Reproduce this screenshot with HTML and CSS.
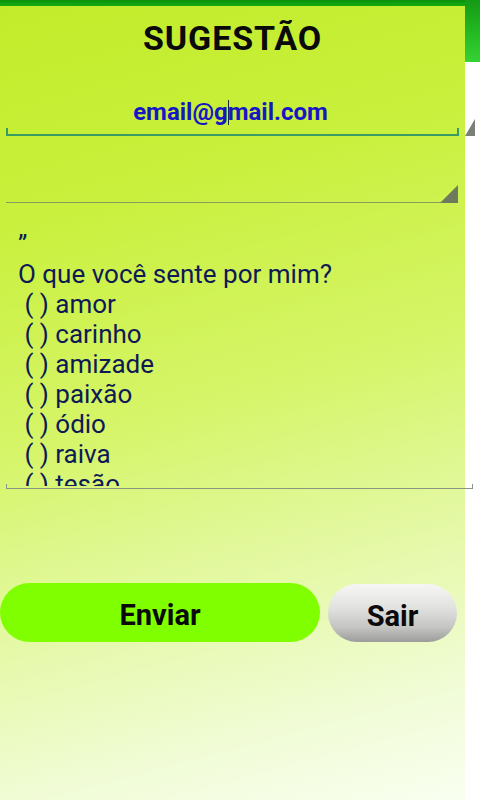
FILE: index.html
```html
<!DOCTYPE html>
<html lang="pt">
<head>
<meta charset="utf-8">
<title>Sugestão</title>
<link rel="stylesheet" href="styles.css">
</head>
<body>
<div class="screen">
  <main class="panel">
    <div class="topbar"></div>
    <h1 class="title">SUGESTÃO</h1>
    <div class="field email-field">
      <span class="email">email@g<span class="caret"></span>mail.com</span>
      <span class="spin spin-email"></span>
    </div>
    <div class="field blank-field">
      <span class="spin spin-blank"></span>
    </div>
    <div class="textarea">
      <div class="text">”
O que você sente por mim?
 ( ) amor
 ( ) carinho
 ( ) amizade
 ( ) paixão
 ( ) ódio
 ( ) raiva
 ( ) tesão</div>
    </div>
    <div class="buttons">
      <button class="btn btn-send">Enviar</button>
      <button class="btn btn-exit">Sair</button>
    </div>
  </main>
  <aside class="side"><div class="side-top"></div></aside>
</div>
</body>
</html>
```

FILE: styles.css
```css
html, body {
  margin: 0;
  padding: 0;
  background: #ffffff;
}
body {
  width: 480px;
  height: 800px;
  overflow: hidden;
  font-family: Roboto, "Noto Sans", "Liberation Sans", sans-serif;
}
.screen {
  display: flex;
  width: 480px;
  height: 800px;
}
.panel {
  position: relative;
  width: 465px;
  height: 800px;
  display: flex;
  flex-direction: column;
  background: linear-gradient(165deg, #c2ec2a 0%, #c9f03c 24%, #d6f56a 50%, #e6f9ac 72%, #f1fcd8 88%, #f9fff0 100%);
}
.topbar {
  height: 6px;
  background: linear-gradient(180deg, #0a920a, #16aa12);
}
.side {
  width: 15px;
  background: #ffffff;
}
.side-top {
  height: 62px;
  background: linear-gradient(180deg, #149a14 0%, #22b822 50%, #36d234 100%);
}
.title {
  margin: 13px 0 0;
  height: 38px;
  line-height: 38px;
  font-size: 34px;
  letter-spacing: 0.9px;
  font-weight: 700;
  text-align: center;
  color: #0a0a0a;
}
.field {
  position: relative;
  margin-left: 6px;
}
.email-field {
  margin-top: 41px;
  width: 453px;
  height: 36px;
  border-bottom: 2px solid #3a9c62;
  text-align: center;
}
.email-field::before,
.email-field::after {
  content: "";
  position: absolute;
  bottom: 0;
  width: 2px;
  height: 6px;
  background: #3a9c62;
}
.email-field::before { left: 0; }
.email-field::after { right: 0; }
.email {
  display: inline-block;
  margin-left: -4px;
  line-height: 28px;
  font-size: 24px;
  font-weight: 700;
  color: #1616c4;
}
.caret {
  display: inline-block;
  width: 1px;
  height: 25px;
  margin: 0 -1px -5px 0;
  background: #222244;
}
.spin {
  position: absolute;
  width: 0;
  height: 0;
  border-style: solid;
}
.spin-email {
  right: -16px;
  bottom: -2px;
  border-width: 0 0 17px 10px;
  border-color: transparent transparent #7a7f78 transparent;
}
.blank-field {
  width: 439px;
  height: 66px;
  border-bottom: 1px solid #8c9a62;
}
.spin-blank {
  right: -13px;
  bottom: -1px;
  border-width: 0 0 18px 18px;
  border-color: transparent transparent #6f7a5c transparent;
}
.textarea {
  position: relative;
  margin: 26px 0 0 6px;
  width: 467px;
  padding-bottom: 2px;
  border-bottom: 1px solid #8a9680;
}
.textarea::before,
.textarea::after {
  content: "";
  position: absolute;
  bottom: -1px;
  width: 1px;
  height: 5px;
  background: #8a9680;
}
.textarea::before { left: 0; }
.textarea::after { right: 0; }
.text {
  height: 257px;
  overflow: hidden;
  padding-left: 12px;
  white-space: pre;
  font-size: 26px;
  line-height: 30px;
  color: #0e1a56;
}
.buttons {
  display: flex;
  gap: 8px;
  margin-top: 94px;
  height: 59px;
}
.btn {
  border: none;
  padding: 5px 0 0;
  font-family: Roboto, "Noto Sans", "Liberation Sans", sans-serif;
  font-size: 29px;
  font-weight: 700;
  color: #0a0a0a;
  height: 59px;
  border-radius: 30px;
}
.btn-send {
  width: 320px;
  background: #80ff00;
}
.btn-exit {
  width: 129px;
  height: 58px;
  margin-top: 1px;
  background: linear-gradient(180deg, #f6f6f4 0%, #e2e2e0 40%, #c4c4c2 75%, #9c9c9c 100%);
}
```
